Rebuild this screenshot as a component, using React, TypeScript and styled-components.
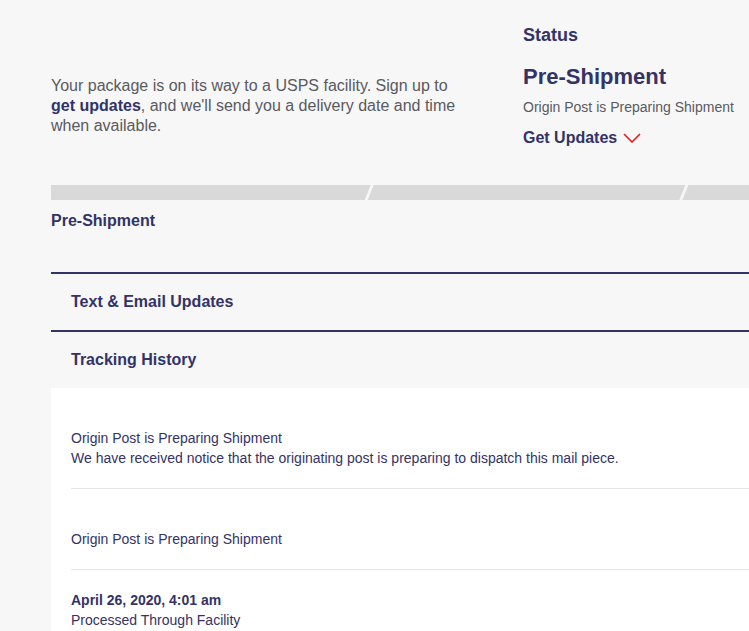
import React from "react";
import styled, { createGlobalStyle } from "styled-components";

const Global = createGlobalStyle`
  html, body { margin: 0; padding: 0; background: #f7f7f7; overflow: hidden; }
  body { font-family: "Liberation Sans", Arial, Helvetica, sans-serif; }
`;

const NAVY = "#333366";

const Page = styled.div`
  width: 1000px;
  padding: 25px 0 0 51px;
  background: #f7f7f7;
  min-height: 631px;
  box-sizing: border-box;
`;

const Top = styled.section`
  display: flex;
  gap: 52px;
  height: 160px;
`;

const Intro = styled.p`
  width: 420px;
  margin: 51px 0 0;
  font-size: 16px;
  line-height: 20px;
  color: #5a5a5f;
  strong { color: ${NAVY}; font-weight: 700; }
`;

const StatusCol = styled.div`
  display: flex;
  flex-direction: column;
`;

const StatusLabel = styled.div`
  font-size: 18px;
  line-height: 20px;
  font-weight: 700;
  color: ${NAVY};
`;

const StatusTitle = styled.div`
  margin-top: 18px;
  font-size: 22px;
  line-height: 28px;
  font-weight: 700;
  color: ${NAVY};
`;

const StatusDetail = styled.div`
  margin-top: 7px;
  font-size: 14px;
  line-height: 18px;
  color: #5a5a5f;
`;

const GetUpdates = styled.div`
  margin-top: 12px;
  display: flex;
  align-items: center;
  gap: 6px;
  font-size: 16px;
  line-height: 20px;
  font-weight: 700;
  color: ${NAVY};
`;

const Bar = styled.div`
  display: flex;
  height: 15px;
  width: 949px;
`;

const Segment = styled.div<{ $first?: boolean }>`
  flex: 1;
  background: #d9d9d9;
  margin-left: ${(p) => (p.$first ? "0" : "-5px")};
  clip-path: ${(p) =>
    p.$first
      ? "polygon(0 0, 100% 0, calc(100% - 6px) 100%, 0 100%)"
      : "polygon(8px 0, 100% 0, calc(100% - 6px) 100%, 2px 100%)"};
`;

const StageName = styled.div`
  margin-top: 11px;
  font-size: 16px;
  line-height: 20px;
  font-weight: 700;
  color: ${NAVY};
  padding-bottom: 41px;
`;

const AccRow = styled.div`
  border-top: 2px solid ${NAVY};
  height: 56px;
  display: flex;
  align-items: center;
  padding-left: 20px;
  font-size: 16px;
  font-weight: 700;
  color: ${NAVY};
`;

const Panel = styled.div`
  background: #ffffff;
  padding: 0 20px;
`;

const Event = styled.div<{ $last?: boolean }>`
  padding: 20px 0;
  border-bottom: ${(p) => (p.$last ? "none" : "1px solid #e6e6e6")};
  font-size: 14px;
  line-height: 20px;
  color: ${NAVY};
`;

const EventDate = styled.div`
  height: 20px;
  font-weight: 700;
`;

const Chevron = () => (
  <svg width="18" height="10" viewBox="0 0 18 10" fill="none">
    <path d="M1 1 L9 9 L17 1" stroke="#e71921" strokeWidth="1.6" />
  </svg>
);

const events = [
  {
    date: "",
    lines: [
      "Origin Post is Preparing Shipment",
      "We have received notice that the originating post is preparing to dispatch this mail piece.",
    ],
  },
  { date: "", lines: ["Origin Post is Preparing Shipment"] },
  { date: "April 26, 2020, 4:01 am", lines: ["Processed Through Facility"] },
];

export default function App() {
  return (
    <>
      <Global />
      <Page>
        <Top>
          <Intro>
            Your package is on its way to a USPS facility. Sign up to{" "}
            <strong>get updates</strong>, and we'll send you a delivery date and time when
            available.
          </Intro>
          <StatusCol>
            <StatusLabel>Status</StatusLabel>
            <StatusTitle>Pre-Shipment</StatusTitle>
            <StatusDetail>Origin Post is Preparing Shipment</StatusDetail>
            <GetUpdates>
              Get Updates <Chevron />
            </GetUpdates>
          </StatusCol>
        </Top>
        <Bar>
          <Segment $first />
          <Segment />
          <Segment />
        </Bar>
        <StageName>Pre-Shipment</StageName>
        <AccRow>Text &amp; Email Updates</AccRow>
        <AccRow>Tracking History</AccRow>
        <Panel>
          {events.map((e, i) => (
            <Event key={i} $last={i === events.length - 1}>
              <EventDate>{e.date}</EventDate>
              {e.lines.map((l) => (
                <div key={l}>{l}</div>
              ))}
            </Event>
          ))}
        </Panel>
      </Page>
    </>
  );
}
